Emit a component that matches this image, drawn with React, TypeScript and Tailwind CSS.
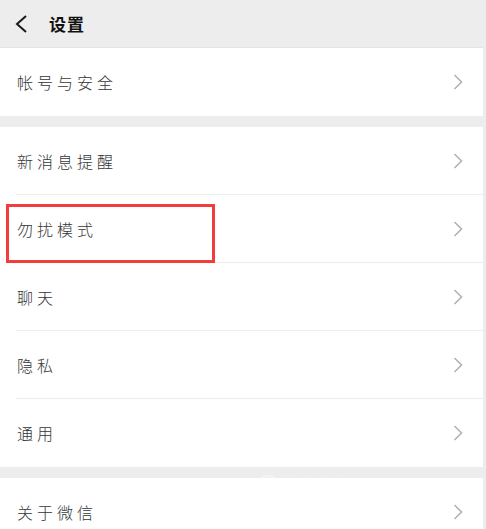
import { ReactNode } from 'react';

const font = { fontFamily: '"Noto Sans CJK SC", "Noto Sans", sans-serif' };

function Chevron() {
    return (
        <svg width="10" height="16" viewBox="0 0 10 16" className="shrink-0">
            <path d="M1.5 1 L8.5 8 L1.5 15" fill="none" stroke="#b2b2b2" strokeWidth="1.6" />
        </svg>
    );
}

function Row({ label, last, children }: { label: string; last?: boolean; children?: ReactNode }) {
    return (
        <div className="relative h-[68px] flex items-center bg-white pl-[17px] pr-[20px]">
            <span className="flex-1 text-[16px] text-[#353535] tracking-[4px] font-light">{label}</span>
            <Chevron />
            {!last && <div className="absolute left-[16px] right-0 bottom-0 h-px bg-[#ececec]" />}
            {children}
        </div>
    );
}

export default function App() {
    return (
        <div className="w-[486px] h-[529px] overflow-hidden bg-[#ededed]" style={font}>
            <div className="w-[483px] flex flex-col">
                {/* Header */}
                <div className="h-[48px] flex items-center bg-[#ededed] border-b border-[#e3e3e3]">
                    <svg width="14" height="18" viewBox="0 0 14 18" className="ml-[14px]">
                        <path d="M12 1 L3 9 L12 17" fill="none" stroke="#1a1a1a" strokeWidth="2" />
                    </svg>
                    <span className="ml-[21px] text-[17px] font-bold text-[#111] tracking-[1px]">设置</span>
                </div>

                <Row label="帐号与安全" last />
                <div className="h-[11px]" />

                <Row label="新消息提醒" />
                <Row label="勿扰模式">
                    <div className="absolute left-[6px] top-[9px] w-[209px] h-[59px] border-[3px] border-[#f23d3d]" />
                </Row>
                <Row label="聊天" />
                <Row label="隐私" />
                <Row label="通用" last />
                <div className="h-[11px]" />

                <div className="relative">
                    <Row label="关于微信" last />
                    <div className="absolute left-[258px] top-[-6px] flex items-center gap-1 text-white/70 opacity-60">
                        <span className="w-[20px] h-[20px] rounded-full border-2 border-white/80 text-[12px] font-bold flex items-center justify-center">S</span>
                        <span className="text-[17px]">搜狗指南</span>
                    </div>
                </div>
            </div>
        </div>
    );
}
